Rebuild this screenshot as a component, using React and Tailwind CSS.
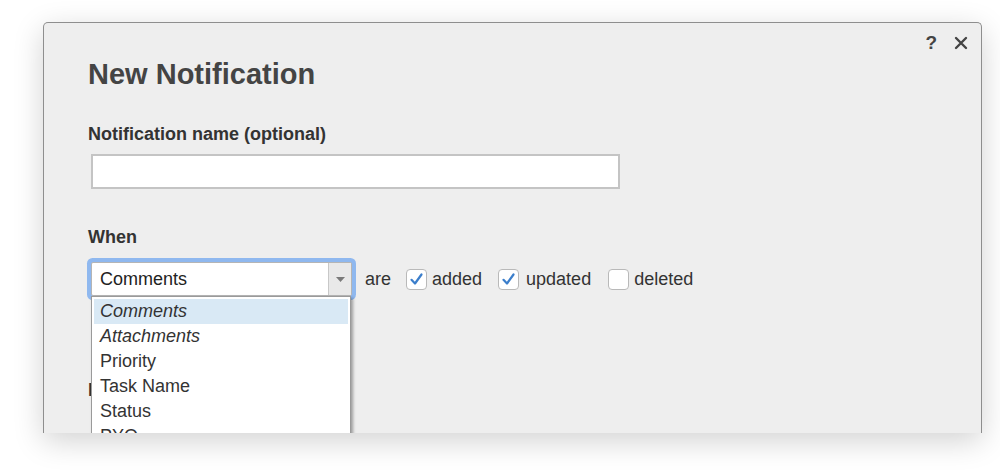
import React from "react";

const options = [
    { label: "Comments", italic: true, active: true },
    { label: "Attachments", italic: true },
    { label: "Priority" },
    { label: "Task Name" },
    { label: "Status" },
    { label: "PYO" },
];

function Check({ checked }) {
    return (
        <span className="flex h-[21px] w-[21px] items-center justify-center rounded-[4px] border border-[#b9b9b9] bg-white">
            {checked && (
                <svg width="15" height="15" viewBox="0 0 15 15">
                    <path d="M2.5 7.8 L6 11.5 L12.5 2.5" fill="none" stroke="#3b7ecb" strokeWidth="2.2" strokeLinecap="round" strokeLinejoin="round" />
                </svg>
            )}
        </span>
    );
}

export default function App() {
    return (
        <div
            className="h-[471px] w-[1000px] overflow-hidden bg-white pl-[43px] pt-[22px]"
            style={{ fontFamily: '"Liberation Sans", Arial, sans-serif' }}
        >
            <div className="relative h-[411px] w-[939px] overflow-hidden rounded-t-[5px] border border-b-0 border-[#8e8e8e] bg-[#eeeeee] shadow-[0_8px_30px_rgba(0,0,0,0.18)]">
                {/* top right controls */}
                <div className="absolute right-[13px] top-[10px] flex items-center gap-[17px] text-[#444]">
                    <span className="text-[19px] font-bold leading-none">?</span>
                    <svg width="14" height="14" viewBox="0 0 14 14">
                        <path d="M2 2 L12 12 M12 2 L2 12" stroke="#444" strokeWidth="2.4" strokeLinecap="round" />
                    </svg>
                </div>

                <div className="pl-[44px] pt-[34px]">
                    <h1 className="text-[29px] font-bold leading-[34px] text-[#444]">New Notification</h1>

                    <div className="mt-[32px] text-[18px] font-bold leading-[22px] text-[#333]">Notification name (optional)</div>
                    <div className="mt-[9px] pl-[3px]">
                        <div className="h-[35px] w-[529px] border-2 border-[#c4c4c4] bg-white" />
                    </div>

                    <div className="mt-[37px] text-[18px] font-bold leading-[22px] text-[#333]">When</div>

                    <div className="relative mt-[14px] flex items-center pl-[3px] text-[18px] text-[#333]">
                        <div className="flex h-[34px] w-[261px] items-stretch rounded-[2px] border border-[#b5b5b5] bg-white shadow-[0_0_0_4px_#8fb8ef]">
                            <span className="flex flex-1 items-center pl-[8px] text-[#222]">Comments</span>
                            <span className="flex w-[23px] items-center justify-center border-l border-[#c8c8c8] bg-[#e9e9e9]">
                                <svg width="9" height="5" viewBox="0 0 9 5">
                                    <path d="M0 0 H9 L4.5 5 Z" fill="#7a7a7a" />
                                </svg>
                            </span>
                        </div>
                        <span className="ml-[13px]">are</span>
                        <span className="ml-[15px]"><Check checked /></span>
                        <span className="ml-[5px]">added</span>
                        <span className="ml-[16px]"><Check checked /></span>
                        <span className="ml-[7px]">updated</span>
                        <span className="ml-[17px]"><Check /></span>
                        <span className="ml-[5px]">deleted</span>

                        {/* open dropdown list */}
                        <div className="absolute left-[3px] top-[34px] z-10 w-[260px] border border-[#9a9a9a] bg-white p-[2px] shadow-[2px_2px_3px_rgba(0,0,0,0.35)]">
                            {options.map((o) => (
                                <div
                                    key={o.label}
                                    className={`h-[25px] pl-[6px] leading-[25px] text-[#333] ${o.italic ? "italic" : ""} ${o.active ? "bg-[#d9e9f5]" : ""}`}
                                >
                                    {o.label}
                                </div>
                            ))}
                        </div>
                    </div>

                    <div className="mt-[83px] text-[18px] font-bold leading-[22px] text-[#333]">If</div>
                </div>
            </div>
        </div>
    );
}
